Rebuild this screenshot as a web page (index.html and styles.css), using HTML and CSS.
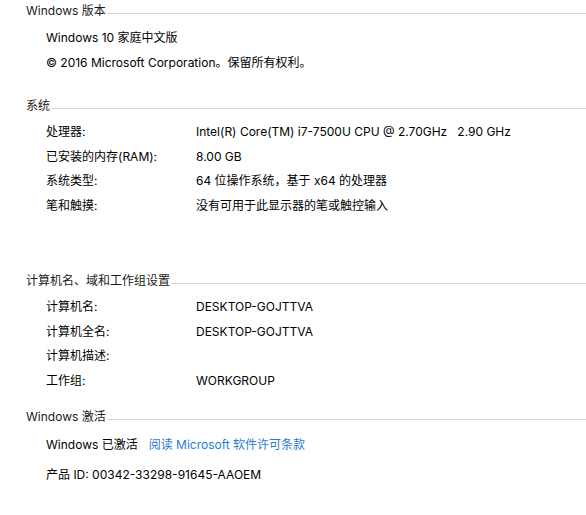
FILE: index.html
```html
<!DOCTYPE html>
<html lang="zh-CN">
<head>
<meta charset="utf-8">
<title>系统</title>
<link rel="stylesheet" href="styles.css">
</head>
<body>
<div class="page">
  <section class="section sec-version">
    <div class="head"><span class="head-text">Windows 版本</span><span class="rule"></span></div>
    <div class="rows">
      <div class="row"><span class="full">Windows 10 家庭中文版</span></div>
      <div class="row"><span class="full">© 2016 Microsoft Corporation。保留所有权利。</span></div>
    </div>
  </section>

  <section class="section sec-system">
    <div class="head"><span class="head-text">系统</span><span class="rule"></span></div>
    <div class="rows">
      <div class="row"><span class="label">处理器:</span><span class="value">Intel(R) Core(TM) i7-7500U CPU @ 2.70GHz&nbsp;&nbsp;&nbsp;2.90 GHz</span></div>
      <div class="row"><span class="label">已安装的内存(RAM):</span><span class="value">8.00 GB</span></div>
      <div class="row"><span class="label">系统类型:</span><span class="value">64 位操作系统，基于 x64 的处理器</span></div>
      <div class="row"><span class="label">笔和触摸:</span><span class="value">没有可用于此显示器的笔或触控输入</span></div>
    </div>
  </section>

  <section class="section sec-computer">
    <div class="head"><span class="head-text">计算机名、域和工作组设置</span><span class="rule"></span></div>
    <div class="rows">
      <div class="row"><span class="label">计算机名:</span><span class="value">DESKTOP-GOJTTVA</span></div>
      <div class="row"><span class="label">计算机全名:</span><span class="value">DESKTOP-GOJTTVA</span></div>
      <div class="row"><span class="label">计算机描述:</span><span class="value"></span></div>
      <div class="row"><span class="label">工作组:</span><span class="value">WORKGROUP</span></div>
    </div>
  </section>

  <section class="section sec-activation">
    <div class="head"><span class="head-text">Windows 激活</span><span class="rule"></span></div>
    <div class="rows">
      <div class="row"><span class="full">Windows 已激活<a class="link" href="#">阅读 Microsoft 软件许可条款</a></span></div>
      <div class="row row-id"><span class="full">产品 ID: 00342-33298-91645-AAOEM</span></div>
    </div>
  </section>
</div>
</body>
</html>
```

FILE: styles.css
```css
html, body {
  margin: 0;
  padding: 0;
  background: #ffffff;
}

body {
  font-family: "Inter", "Noto Sans CJK SC", sans-serif;
  font-size: 12px;
  color: #000000;
}

.page {
  padding-top: 3px;
  display: flex;
  flex-direction: column;
}

.head {
  display: flex;
  align-items: center;
  height: 16px;
  line-height: 16px;
  padding-left: 26px;
}

.head-text {
  white-space: nowrap;
  color: #1a1a1a;
}

.rule {
  flex: 1;
  height: 0;
  border-top: 1px solid #d0d0d0;
  margin-left: 2px;
  margin-top: 5px;
}

.rows {
  padding-top: 6px;
  padding-left: 46px;
}

.row {
  display: flex;
  height: 24.5px;
  line-height: 24.5px;
  white-space: nowrap;
}

.label {
  width: 150px;
}

.link {
  color: #2b7cd3;
  text-decoration: none;
  margin-left: 11px;
}

.sec-version .row {
  height: 25px;
  line-height: 25px;
}

.sec-system {
  margin-top: 23px;
}

.sec-computer {
  margin-top: 55px;
}

.sec-activation {
  margin-top: 16px;
}

.sec-activation .rows {
  padding-top: 8px;
}

.row-id {
  margin-top: 5px;
}
```
